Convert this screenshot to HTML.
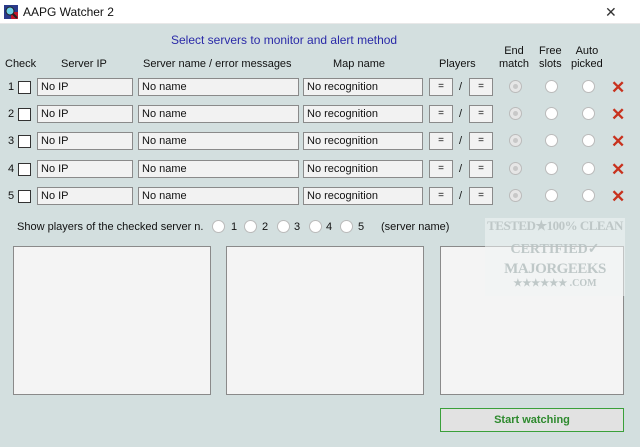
<!DOCTYPE html>
<html><head><meta charset="utf-8"><style>
*{box-sizing:border-box;margin:0;padding:0}
body{width:640px;height:447px;overflow:hidden;background:#d3dfdf;font-family:"Liberation Sans",Arial,sans-serif;font-size:11px;color:#111;position:relative}
.a{position:absolute}
.title{left:0;top:0;width:640px;height:24px;background:#fff;border-bottom:1px solid #e8e8e8}
.tb{position:absolute;height:18px;border:1px solid #8a8a8a;background:#f2f2f2;padding:2px 3px;font-size:11px;line-height:13px}
.cb{position:absolute;width:13px;height:13px;border:1px solid #333;background:#fff}
.rd{position:absolute;width:13px;height:13px;border-radius:50%;border:1px solid #bbb;background:#fff}
.rd.g{background:#e6e6e6}
.rd.g::after{content:"";position:absolute;left:3px;top:3px;width:5px;height:5px;border-radius:50%;background:#c8c8c8}
.eq{position:absolute;width:24px;height:18px;border:1px solid #8a8a8a;background:#f2f2f2;text-align:center;font-size:10px;line-height:15px}
.x{position:absolute;color:#c8321e;font-size:17px;font-weight:bold;line-height:17px}
.box{position:absolute;top:246px;height:149px;border:1px solid #8a8a8a;background:#f4f4f4}
.hd{position:absolute;text-align:center;font-size:11px;line-height:13px}
.wm div{white-space:nowrap}
</style></head><body>
<div class="a title"></div>
<svg class="a" style="left:4px;top:5px" width="14" height="14"><rect x="0" y="0" width="14" height="14" fill="#2a3a8a"/><rect x="7" y="7" width="7" height="7" fill="#c0182a"/><circle cx="6" cy="6" r="4" fill="#6fd0e8" stroke="#222" stroke-width="1"/><line x1="9" y1="9" x2="13" y2="13" stroke="#222" stroke-width="2"/></svg>
<div class="a" style="left:23px;top:5px;font-size:12px">AAPG Watcher 2</div>
<div class="a" style="left:605px;top:4px;font-size:14px;color:#333">✕</div>
<div class="a" style="left:171px;top:33px;font-size:12px;color:#2a2aa8">Select servers to monitor and alert method</div>
<div class="hd" style="left:5px;top:58px">Check</div>
<div class="hd" style="left:61px;top:58px">Server IP</div>
<div class="hd" style="left:143px;top:58px">Server name / error messages</div>
<div class="hd" style="left:333px;top:58px">Map name</div>
<div class="hd" style="left:439px;top:58px">Players</div>
<div class="hd" style="left:499px;top:45px">End<br>match</div>
<div class="hd" style="left:539px;top:45px">Free<br>slots</div>
<div class="hd" style="left:571px;top:45px">Auto<br>picked</div>
<div id="rows"></div>
<div class="a" style="left:17px;top:221px">Show players of the checked server n.</div>
<div class="rd" style="left:212px;top:220px"></div><div class="a" style="left:231px;top:221px">1</div>
<div class="rd" style="left:244px;top:220px"></div><div class="a" style="left:262px;top:221px">2</div>
<div class="rd" style="left:277px;top:220px"></div><div class="a" style="left:294px;top:221px">3</div>
<div class="rd" style="left:309px;top:220px"></div><div class="a" style="left:326px;top:221px">4</div>
<div class="rd" style="left:340px;top:220px"></div><div class="a" style="left:358px;top:221px">5</div>
<div class="a" style="left:381px;top:221px">(server name)</div>
<div class="box" style="left:13px;width:198px"></div>
<div class="box" style="left:226px;width:198px"></div>
<div class="box" style="left:440px;width:184px"></div>
<div class="a wm" style="left:485px;top:218px;width:140px;height:78px;background:rgba(240,244,244,0.55);font-family:'Liberation Serif',serif;font-weight:bold;color:rgba(185,195,195,0.9);text-align:center;overflow:hidden">
<div style="font-size:13px;line-height:16px;letter-spacing:-0.5px">TESTED★100% CLEAN</div>
<div style="font-size:14px;line-height:20px;margin-top:6px">CERTIFIED✓</div>
<div style="font-size:15px;line-height:18px;letter-spacing:-0.5px">MAJORGEEKS</div>
<div style="font-size:10px;line-height:12px">★★★★★★ .COM</div></div>
<div class="a" style="left:440px;top:408px;width:184px;height:24px;border:1px solid #3aa03a;background:#e2e2e2;color:#2e8a2e;font-weight:bold;font-size:11px;text-align:center;line-height:22px">Start watching</div>
<script>
var h="",ys=[78,105,132,160,187];
for(var i=0;i<5;i++){var y=ys[i];
h+='<div class="a" style="left:8px;top:'+(y+3)+'px">'+(i+1)+'</div>';
h+='<div class="cb" style="left:18px;top:'+(y+3)+'px"></div>';
h+='<div class="tb" style="left:37px;top:'+y+'px;width:96px">No IP</div>';
h+='<div class="tb" style="left:138px;top:'+y+'px;width:161px">No name</div>';
h+='<div class="tb" style="left:303px;top:'+y+'px;width:120px">No recognition</div>';
h+='<div class="eq" style="left:429px;top:'+y+'px">=</div>';
h+='<div class="a" style="left:459px;top:'+(y+3)+'px">/</div>';
h+='<div class="eq" style="left:469px;top:'+y+'px">=</div>';
h+='<div class="rd g" style="left:509px;top:'+(y+2)+'px"></div>';
h+='<div class="rd" style="left:545px;top:'+(y+2)+'px"></div>';
h+='<div class="rd" style="left:582px;top:'+(y+2)+'px"></div>';
h+='<div class="x" style="left:611px;top:'+(y+1)+'px">✕</div>';}
document.getElementById("rows").innerHTML=h;
</script>
</body></html>
